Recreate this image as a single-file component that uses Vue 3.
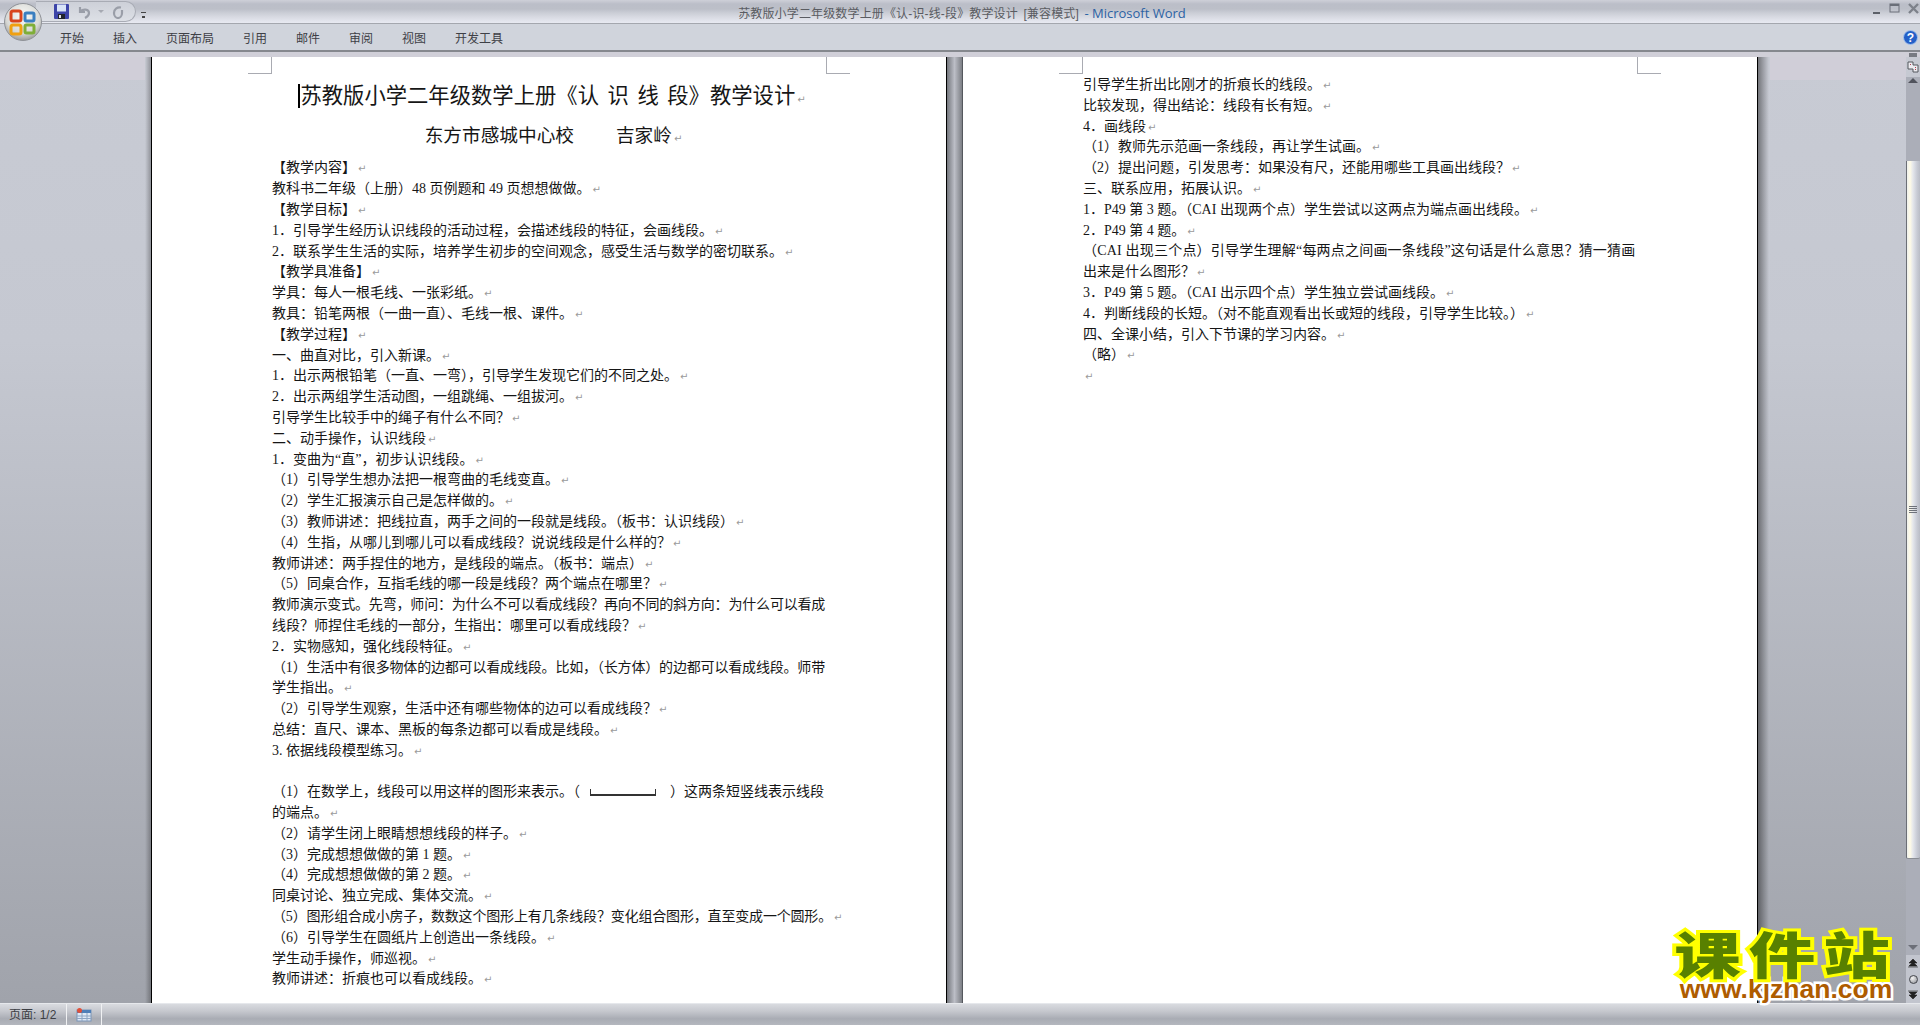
<template>
  <div class="word">
    <!-- title bar -->
    <div class="titlebar">
      <span class="doc-title">苏教版小学二年级数学上册《认-识-线-段》教学设计 [兼容模式] <em>- Microsoft Word</em></span>
      <div class="winbtns">
        <svg width="47" height="14" viewBox="0 0 47 14">
          <rect x="0" y="10" width="7" height="2" fill="#5c6068" />
          <rect x="17" y="2" width="9" height="8" fill="none" stroke="#6a6e78" stroke-width="1" />
          <rect x="17" y="2" width="9" height="2" fill="#6a6e78" />
          <path d="M36 2l9 9M45 2l-9 9" stroke="#7d818a" stroke-width="2.4" fill="none" />
        </svg>
      </div>
    </div>

    <!-- office button and quick access toolbar -->
    <div class="qat">
      <svg class="ic-save" width="15" height="15" viewBox="0 0 15 15">
        <rect width="15" height="15" rx="1" fill="#3c44a8" />
        <rect x="3" y="0.5" width="9" height="7" fill="#d8e4f8" />
        <rect x="4" y="10" width="7" height="5" fill="#20242c" />
        <rect x="5" y="11" width="2" height="3" fill="#dfe2ea" />
      </svg>
      <svg width="14" height="14" viewBox="0 0 14 14">
        <path d="M3 2v5h5M3.5 6.5C6 3.5 12 4 12 8c0 2.500-2 4-4 5" fill="none" stroke="#9a9ea8" stroke-width="2.200" />
      </svg>
      <span class="caret"></span>
      <svg width="14" height="14" viewBox="0 0 14 14">
        <path d="M10 2.500C6 2 3 4 3 8c0 3 2 5 4 5s4-2 4-5V5" fill="none" stroke="#9a9ea8" stroke-width="2.200" />
      </svg>
    </div>
    <span class="qat-more"></span>
    <svg class="office" width="38" height="38" viewBox="0 0 38 38">
      <defs>
        <radialGradient id="orb" cx="50%" cy="35%" r="65%">
          <stop offset="0" stop-color="#fbfbf8" />
          <stop offset="0.7" stop-color="#d8d9d6" />
          <stop offset="1" stop-color="#9a9b9a" />
        </radialGradient>
      </defs>
      <circle cx="19" cy="19" r="18.500" fill="url(#orb)" stroke="#8f9298" />
      <g fill="none" stroke-width="3">
        <rect x="7" y="8" width="10" height="10" rx="2" stroke="#d8441c" />
        <rect x="21" y="10" width="9" height="8" rx="1.500" stroke="#3a7fc0" />
        <rect x="7" y="22" width="10" height="9" rx="2" stroke="#f0a010" />
        <rect x="21" y="22" width="9" height="8" rx="1.500" stroke="#7fae38" />
      </g>
    </svg>

    <!-- ribbon tabs -->
    <div class="ribbon">
      <span v-for="tab in tabs" :key="tab">{{ tab }}</span>
      <svg class="help" width="15" height="15" viewBox="0 0 15 15">
        <circle cx="7.500" cy="7.500" r="7" fill="#2460c8" stroke="#a8c4ec" />
        <text x="7.500" y="12" text-anchor="middle" class="help-q">?</text>
      </svg>
    </div>
    <div class="strip"><i></i></div>

    <!-- document area -->
    <div class="doc">
      <div class="gutter left"></div>

      <div class="page first">
        <i class="crop tl"></i>
        <i class="crop tr"></i>
        <div class="title mark"><span class="cursor">苏教版小学二年级数学上册《认 识 线 段》教学设计</span></div>
        <div class="sub mark">东方市感城中心校　　  吉家岭</div>
        <div class="body">
          <div v-for="(ln, i) in pageOne" :key="i" class="ln" :class="{ mark: !ln.bare, fit: ln.fit, wide: ln.wide }">
            {{ ln.t }}<template v-if="ln.seg"><i class="seg"></i>{{ ln.seg }}</template>
          </div>
        </div>
      </div>

      <div class="gap"></div>

      <div class="page second">
        <i class="crop tl"></i>
        <i class="crop tr"></i>
        <div class="body">
          <div v-for="(ln, i) in pageTwo" :key="i" class="ln" :class="{ mark: !ln.bare, fit: ln.fit, wide: ln.wide }">{{ ln.t }}</div>
        </div>
      </div>

      <div class="gutter right"></div>

      <div class="vscroll">
        <div class="ruler-btn">
          <svg width="12" height="13" viewBox="0 0 12 13">
            <path d="M1 1h5v3h5v7H6V8H1z" fill="#ecebf0" stroke="#55585f" />
            <path d="M3 3l1 1M8 6l1 1M8 9l1-1" stroke="#b04050" />
          </svg>
        </div>
        <div class="arrow up"></div>
        <div class="track short"></div>
        <div class="thumb">
          <i></i><i></i><i></i><i></i>
        </div>
        <div class="track long"></div>
        <div class="arrow down"></div>
        <div class="nav">
          <svg width="10" height="9" viewBox="0 0 10 9"><path d="M5 0L9 4H1zM5 3L9 7H1zM0 8h10" fill="#222" stroke="#222" stroke-width="0.600" /></svg>
          <b class="ball"></b>
          <svg width="10" height="9" viewBox="0 0 10 9"><path d="M0 1h10M5 6L9 2H1zM5 9L9 5H1z" fill="#222" stroke="#222" stroke-width="0.600" /></svg>
        </div>
      </div>
    </div>

    <!-- status bar -->
    <div class="status">
      <span class="pages">页面: 1/2</span>
      <span class="table-ic">
        <svg width="16" height="14" viewBox="0 0 16 14">
          <rect x="1" y="2" width="14" height="11" fill="#dfe9f6" stroke="#7a95b8" />
          <rect x="1" y="2" width="14" height="3" fill="#4f7fb8" />
          <path d="M1 8h14M1 10.500h14M6 5v8M11 5v8" stroke="#8ea6c4" />
          <circle cx="3.500" cy="2.500" r="2.500" fill="#e0503a" />
        </svg>
      </span>
    </div>

    <!-- site watermark -->
    <div class="stamp">
      <div class="stamp-cn">课件站</div>
      <div class="stamp-en">www.kjzhan.com</div>
    </div>
  </div>
</template>

<script setup>
const tabs = ['开始', '插入', '页面布局', '引用', '邮件', '审阅', '视图', '开发工具']

const rows = (src) => src.map((x) => (typeof x === 'string' ? { t: x } : x))

const pageOne = rows([
  '【教学内容】',
  '教科书二年级（上册）48 页例题和 49 页想想做做。',
  '【教学目标】',
  '1．引导学生经历认识线段的活动过程，会描述线段的特征，会画线段。',
  '2．联系学生生活的实际，培养学生初步的空间观念，感受生活与数学的密切联系。',
  '【教学具准备】',
  '学具：每人一根毛线、一张彩纸。',
  '教具：铅笔两根（一曲一直）、毛线一根、课件。',
  '【教学过程】',
  '一、曲直对比，引入新课。',
  '1．出示两根铅笔（一直、一弯），引导学生发现它们的不同之处。',
  '2．出示两组学生活动图，一组跳绳、一组拔河。',
  '引导学生比较手中的绳子有什么不同？',
  '二、动手操作，认识线段',
  '1．变曲为“直”，初步认识线段。',
  '（1）引导学生想办法把一根弯曲的毛线变直。',
  '（2）学生汇报演示自己是怎样做的。',
  '（3）教师讲述：把线拉直，两手之间的一段就是线段。（板书：认识线段）',
  '（4）生指，从哪儿到哪儿可以看成线段？说说线段是什么样的？',
  '教师讲述：两手捏住的地方，是线段的端点。（板书：端点）',
  '（5）同桌合作，互指毛线的哪一段是线段？两个端点在哪里？',
  { t: '教师演示变式。先弯，师问：为什么不可以看成线段？再向不同的斜方向：为什么可以看成', bare: true, fit: true },
  '线段？师捏住毛线的一部分，生指出：哪里可以看成线段？',
  '2．实物感知，强化线段特征。',
  { t: '（1）生活中有很多物体的边都可以看成线段。比如，（长方体）的边都可以看成线段。师带', bare: true, fit: true },
  '学生指出。',
  '（2）引导学生观察，生活中还有哪些物体的边可以看成线段？',
  '总结：直尺、课本、黑板的每条边都可以看成是线段。',
  '3. 依据线段模型练习。',
  { t: '\u00a0', bare: true },
  { t: '（1）在数学上，线段可以用这样的图形来表示。（', seg: '）这两条短竖线表示线段', bare: true },
  '的端点。',
  '（2）请学生闭上眼睛想想线段的样子。',
  '（3）完成想想做做的第 1 题。',
  '（4）完成想想做做的第 2 题。',
  '同桌讨论、独立完成、集体交流。',
  { t: '（5）图形组合成小房子，数数这个图形上有几条线段？变化组合图形，直至变成一个圆形。', fit: true },
  '（6）引导学生在圆纸片上创造出一条线段。',
  '学生动手操作，师巡视。',
  '教师讲述：折痕也可以看成线段。',
])

const pageTwo = rows([
  '引导学生折出比刚才的折痕长的线段。',
  '比较发现，得出结论：线段有长有短。',
  '4．画线段',
  '（1）教师先示范画一条线段，再让学生试画。',
  '（2）提出问题，引发思考：如果没有尺，还能用哪些工具画出线段？',
  '三、联系应用，拓展认识。',
  '1．P49 第 3 题。（CAI 出现两个点）学生尝试以这两点为端点画出线段。',
  '2．P49 第 4 题。',
  { t: '（CAI 出现三个点）引导学生理解“每两点之间画一条线段”这句话是什么意思？猜一猜画', bare: true, wide: true },
  '出来是什么图形？',
  '3．P49 第 5 题。（CAI 出示四个点）学生独立尝试画线段。',
  '4．判断线段的长短。（对不能直观看出长或短的线段，引导学生比较。）',
  '四、全课小结，引入下节课的学习内容。',
  '（略）',
  '',
])
</script>

<style>
html,
body {
  margin: 0;
  overflow: hidden;
}
</style>

<style scoped>
.word {
  position: relative;
  display: flex;
  flex-direction: column;
  width: 1920px;
  height: 1025px;
  overflow: hidden;
  font-family: "Liberation Sans", "Noto Sans CJK SC", sans-serif;
  background: #d0d4dc;
}

.titlebar {
  position: relative;
  flex: none;
  height: 24px;
  box-sizing: border-box;
  padding-left: 4px;
  text-align: center;
  font-size: 12px;
  line-height: 26px;
  color: #5a5c62;
  border-bottom: 1px solid #a4a7ae;
  background: linear-gradient(180deg, #ced0d8 0, #bbbec8 4px, #bcbfc8 9px, #cbced6 13px, #d8dae2 17px, #e8eaf2 23px);
}

.doc-title {
  letter-spacing: 0.15px;
  word-spacing: 2px;
}

.doc-title em {
  font-family: "Open Sans", sans-serif;
  font-size: 13px;
  font-style: normal;
  letter-spacing: 0;
  word-spacing: 0;
  color: #2c62a4;
}

.winbtns {
  position: absolute;
  right: 0;
  top: 2px;
  line-height: 0;
}

.qat {
  position: absolute;
  z-index: 2;
  left: 36px;
  top: 1px;
  display: flex;
  align-items: center;
  gap: 8px;
  width: 100px;
  height: 21px;
  box-sizing: border-box;
  padding-left: 18px;
  border: 1px solid #a8abb4;
  border-left: none;
  border-radius: 0 12px 12px 0;
  background: linear-gradient(180deg, #cdd0d8, #dde0e6);
}

.caret {
  width: 0;
  height: 0;
  margin: 0 -1px;
  border: 3px solid transparent;
  border-top-color: #a6a9b2;
  border-bottom: none;
}

.qat-more {
  position: absolute;
  z-index: 2;
  left: 141px;
  top: 12px;
  width: 5px;
  height: 3px;
  border-top: 1px solid #444;
  box-shadow: 0 3px 0 -1px #444;
}

.office {
  position: absolute;
  z-index: 3;
  left: 4px;
  top: 3px;
}

.ribbon {
  position: relative;
  flex: none;
  display: flex;
  align-items: center;
  gap: 29px;
  height: 28px;
  box-sizing: border-box;
  padding-left: 60px;
  font-size: 12px;
  color: #3e4046;
  background: #d0d4dc;
  border-bottom: 2px solid #85888e;
}

.help {
  position: absolute;
  right: 2px;
  top: 6px;
}

.help-q {
  font: bold 12px "Liberation Sans", sans-serif;
  fill: #fff;
}

.strip {
  flex: none;
  display: flex;
  justify-content: flex-end;
  height: 5px;
  background: #d0cfd8;
}

.strip i {
  width: 8px;
  height: 4px;
  margin: 1px 3px 0 0;
  background: #777a82;
}

.doc {
  flex: 1;
  display: flex;
  min-height: 0;
  background: linear-gradient(180deg, #c8cbd4 0, #c5c8d1 30%, #a0a3ab 100%);
}

.gutter {
  position: relative;
  flex: none;
}

.gutter::before {
  content: "";
  position: absolute;
  top: 0;
  height: 23px;
  background: #d0ced8;
}

.gutter.left {
  width: 151px;
  background: linear-gradient(90deg, transparent 145px, rgba(0, 0, 0, 0.28) 151px);
}

.gutter.left::before {
  left: 0;
  width: 145px;
}

.gutter.right {
  flex: 1;
  background: linear-gradient(90deg, rgba(0, 0, 0, 0.42), transparent 11px);
}

.gutter.right::before {
  left: 12px;
  right: 0;
}

.gap {
  flex: none;
  width: 15px;
  background: linear-gradient(90deg, #74777d, #bcbec6 50%, #7c7f85);
}

.page {
  position: relative;
  flex: none;
  width: 796px;
  box-sizing: border-box;
  padding-left: 120px;
  overflow: hidden;
  background: #fff;
  border-left: 1px solid #000;
  border-right: 1px solid #000;
  font-family: "Liberation Serif", "Noto Sans CJK SC", serif;
  color: #161616;
}

.page.first {
  padding-top: 19px;
}

.page.second {
  padding-top: 18px;
  border-left-color: #55585e;
}

.crop {
  position: absolute;
  top: 0;
  width: 23px;
  height: 16px;
  border-bottom: 1px solid #a9abb2;
}

.crop.tl {
  left: 96px;
  border-right: 1px solid #a9abb2;
}

.crop.tr {
  right: 96px;
  border-left: 1px solid #a9abb2;
}

.title,
.sub {
  width: 554px;
  height: 40px;
  line-height: 40px;
  text-align: center;
  white-space: pre;
  box-sizing: border-box;
}

.title {
  padding-left: 6px;
  font-size: 21.33px;
  word-spacing: 0.15em;
}

.sub {
  padding-left: 9px;
  font-size: 18.67px;
}

.cursor {
  border-left: 2px solid #000;
}

.page.first .body {
  margin-top: 2.400px;
}

.ln {
  height: 20.800px;
  line-height: 20.800px;
  font-size: 14px;
  white-space: pre;
}

.fit {
  letter-spacing: -0.17px;
}

.wide {
  letter-spacing: 0.2px;
}

.mark::after {
  content: "↵";
  margin-left: 2px;
  font-family: "DejaVu Sans", sans-serif;
  font-size: 10px;
  color: #9a9a9a;
  word-spacing: 0;
}

.seg {
  display: inline-block;
  width: 66px;
  height: 7px;
  margin: 0 14px 0 10px;
  box-sizing: border-box;
  border: 1px solid #333;
  border-top: none;
  border-bottom-width: 2px;
}

.vscroll {
  flex: none;
  display: flex;
  flex-direction: column;
  width: 14px;
  background: #abaeb8;
}

.ruler-btn {
  flex: none;
  display: flex;
  justify-content: center;
  align-items: center;
  height: 20px;
  background: #c6c9d2;
}

.arrow {
  flex: none;
  position: relative;
  height: 15px;
}

.arrow::after {
  content: "";
  position: absolute;
  left: 2px;
  border: 5px solid transparent;
}

.arrow.up::after {
  top: 1px;
  border-bottom-color: #50535c;
  border-top: none;
}

.arrow.down {
  height: 12px;
}

.arrow.down::after {
  top: 2px;
  border-top-color: #6c6f78;
  border-bottom: none;
}

.track {
  flex: none;
}

.track.short {
  height: 69px;
}

.track.long {
  flex: 1;
}

.thumb {
  flex: none;
  display: flex;
  flex-direction: column;
  align-items: flex-end;
  justify-content: center;
  gap: 1px;
  height: 698px;
  box-sizing: border-box;
  padding-right: 3px;
  border-left: 1px solid #6c6f76;
  border-bottom: 1px solid #8a8d94;
  border-radius: 0 0 2px 2px;
  background: linear-gradient(90deg, #eef0ee 0, #fffbe6 3px, #e4e6ec 6px, #c8cbd5 10px, #b9bcc6 100%);
}

.thumb i {
  width: 8px;
  height: 1px;
  background: #6f727a;
}

.nav {
  flex: none;
  display: flex;
  flex-direction: column;
  align-items: center;
  justify-content: space-between;
  height: 48px;
  box-sizing: border-box;
  padding: 4px 0;
  background: #c2c5ce;
}

.ball {
  width: 7px;
  height: 7px;
  border: 1px solid #44464c;
  border-radius: 50%;
  background: radial-gradient(circle at 35% 30%, #f4f4f4, #8a8c92);
}

.status {
  flex: none;
  display: flex;
  align-items: stretch;
  height: 22px;
  font-size: 12px;
  line-height: 22px;
  color: #3c3e44;
  border-top: 1px solid #e6e8ec;
  box-sizing: border-box;
  background: linear-gradient(180deg, #d9dbe0, #c5c7cd 35%, #a9acb4 70%, #b4b7be);
}

.pages {
  width: 67px;
  box-sizing: border-box;
  padding-left: 9px;
  border-right: 1px solid #f0f1f3;
}

.table-ic {
  display: flex;
  align-items: center;
  justify-content: center;
  width: 34px;
  border-right: 1px solid #f0f1f3;
}

.stamp {
  position: absolute;
  z-index: 4;
  left: 1668px;
  top: 925px;
  width: 236px;
  text-align: center;
  font-weight: 900;
}

.stamp-cn {
  height: 54px;
  font-family: "Noto Sans CJK SC", sans-serif;
  font-size: 50px;
  line-height: 54px;
  letter-spacing: 6px;
  color: #588000;
  -webkit-text-stroke: 6px #ffff00;
  paint-order: stroke fill;
  transform: scaleX(1.33);
}

.stamp-en {
  font-family: "Liberation Sans", sans-serif;
  font-size: 26.500px;
  line-height: 20px;
  color: #ae5c00;
  -webkit-text-stroke: 5px #fff;
  paint-order: stroke fill;
}
</style>
